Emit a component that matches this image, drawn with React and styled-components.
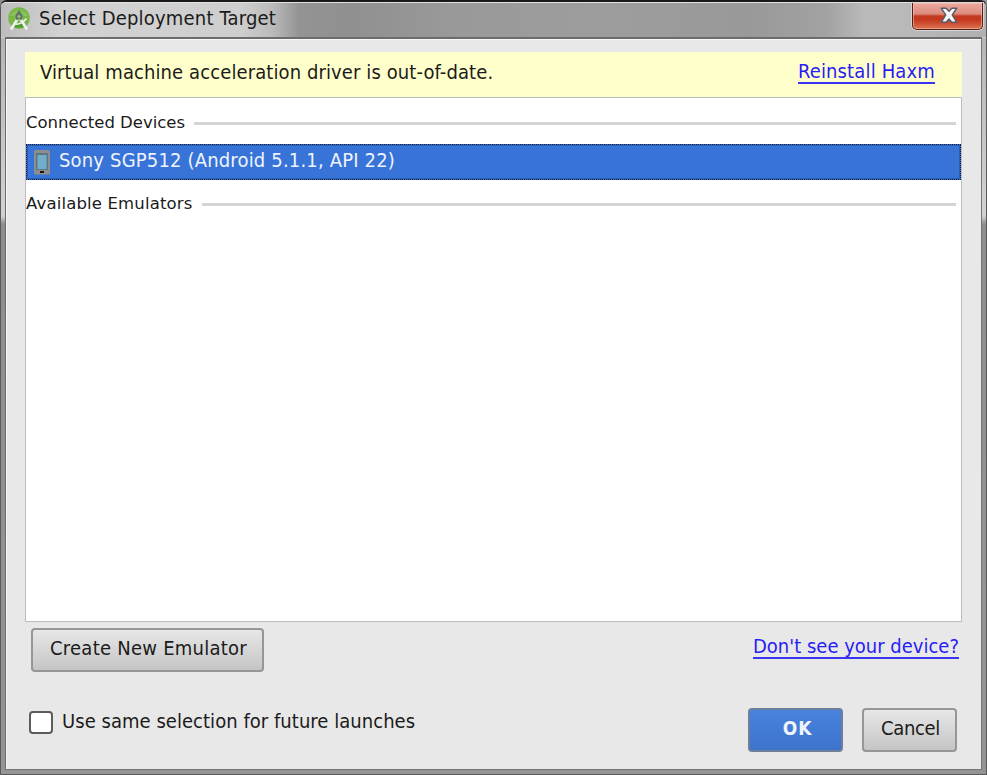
import React from 'react';
import styled, { createGlobalStyle } from 'styled-components';

const GlobalStyle = createGlobalStyle`
  * { box-sizing: border-box; }
  body { margin: 0; background: #8e8e8e; }
`;

const Window = styled.div`
  width: 987px;
  height: 775px;
  display: flex;
  flex-direction: column;
  padding: 0 4px 4px;
  border: 1px solid #5a5a5a;
  border-top: 2px solid #1c1718;
  border-radius: 7px 7px 0 0;
  background: linear-gradient(180deg, #b0b0b0 0, #d2d2d2 214px, #8e8e8e 222px, #949494 100%);
  font-family: "DejaVu Sans Condensed", "DejaVu Sans", sans-serif;
  font-size: 20px;
  color: #1b1b1b;
`;

const TitleBar = styled.header`
  height: 36px;
  margin: 0 -4px;
  padding: 0 3px 0 7px;
  display: flex;
  align-items: flex-start;
  border-top: 1px solid #e2e2e2;
  border-bottom: 1px solid #cfcfcf;
  border-radius: 5px 5px 0 0;
  background: linear-gradient(90deg, #bdbdbd 0, #d2d2d2 60px, #cecece 240px, #bababa 272px, #939393 298px, #909090 350px, #999 450px, #9d9d9d 600px, #999 750px, #a2a2a2 825px, #b9b9b9 862px, #b9b9b9 900px, #b0b0b0 100%);
`;

const Title = styled.h1`
  flex: 1;
  margin: 3px 0 0 7px;
  font: inherit;
  line-height: 24px;
  letter-spacing: 0.2px;
  white-space: nowrap;
`;

const Logo = styled.svg`
  width: 24px;
  height: 24px;
  margin-top: 4px;
`;

const CloseButton = styled.button`
  width: 71px;
  height: 27px;
  padding: 0 0 1px 3px;
  display: flex;
  align-items: center;
  justify-content: center;
  border: 1px solid #541e19;
  border-top: 0;
  border-radius: 0 0 5px 5px;
  background: linear-gradient(180deg, #eba99f 0, #dc8b7d 11px, #c23a20 13px, #c53a20 17px, #dc7352 100%);
  box-shadow: inset 0 0 0 1px rgba(255, 205, 190, 0.5), 0 0 0 1px #d6d6d6;
`;

const Client = styled.main`
  flex: 1;
  display: flex;
  flex-direction: column;
  padding: 13px 19px 0 19px;
  border: 1px solid #6c6c6c;
  border-top-width: 2px;
  margin-top: -1px;
  border-right-color: #777;
  border-bottom-color: #747474;
  background: #e8e8e8;
  box-shadow: inset 1px 1px 0 #f7f7f7;
`;

const Banner = styled.div`
  height: 45px;
  display: flex;
  justify-content: space-between;
  padding: 0 27px 0 15px;
  background: #ffffcc;
  line-height: 41px;
  letter-spacing: 0.1px;
`;

const Link = styled.a`
  height: 24px;
  margin-top: ${(p) => p.$top}px;
  border-bottom: 2px solid #3a35f2;
  color: #281df5;
  line-height: 23px;
  letter-spacing: ${(p) => p.$spacing || 0}px;
  white-space: nowrap;
`;

const DeviceList = styled.section`
  height: 525px;
  border: 1px solid #bdbdbd;
  background: #fff;
`;

const GroupHeading = styled.h2`
  height: 46px;
  margin: 0;
  padding: ${(p) => (p.$first ? 2 : 0)}px 5px 0 0;
  display: flex;
  align-items: center;
  gap: ${(p) => p.$gap}px;
  font: 400 16.5px "DejaVu Sans", sans-serif;
  letter-spacing: ${(p) => p.$spacing || 0}px;
  white-space: nowrap;

  &::after {
    content: "";
    flex: 1;
    height: 3px;
    margin-top: 3px;
    background: #d4d4d4;
  }
`;

const DeviceRow = styled.div`
  height: 36px;
  display: flex;
  align-items: center;
  padding-left: 7px;
  gap: 9px;
  border: 1px dotted #101c38;
  outline: 1px solid #2c5cae;
  outline-offset: -2px;
  background: #3874d8;
  color: #eef3fc;
  letter-spacing: 0.17px;
`;

const DeviceName = styled.span`
  line-height: 24px;
  margin-top: -5px;
`;

const Tools = styled.div`
  display: flex;
  justify-content: space-between;
  padding: 6px 3px 0 6px;
`;

const Button = styled.button`
  width: ${(p) => p.$width}px;
  height: 44px;
  padding: 0 0 5px ${(p) => (p.$primary ? 4 : 2)}px;
  border: 2px solid ${(p) => (p.$primary ? '#6e7f9c' : '#969696')};
  border-radius: 4px;
  background: ${(p) => (p.$primary
    ? 'linear-gradient(180deg, #4883df, #3d73cb)'
    : 'linear-gradient(180deg, #e7e7e7, #c5c5c5)')};
  color: ${(p) => (p.$primary ? '#f0f4fc' : '#1b1b1b')};
  font-family: inherit;
  font-size: ${(p) => (p.$primary ? 19 : 20)}px;
  font-weight: ${(p) => (p.$primary ? 700 : 400)};
  letter-spacing: ${(p) => p.$spacing || 0}px;
  white-space: nowrap;
`;

const Footer = styled.footer`
  display: flex;
  align-items: flex-start;
  margin-top: 36px;
  padding: 0 5px 0 4px;
`;

const CheckLabel = styled.label`
  flex: 1;
  display: flex;
  align-items: center;
  gap: 9px;
  line-height: 24px;
  letter-spacing: 0.04px;
`;

const Checkbox = styled.input`
  appearance: none;
  width: 24px;
  height: 23px;
  margin: 3px 0 0;
  border: 2px solid #5c5c5c;
  border-radius: 4px;
  background: #fff;
`;

const Actions = styled.div`
  display: flex;
  gap: 19px;
`;

const StudioIcon = () => (
  <Logo viewBox="0 0 24 24">
    <circle cx="11" cy="11" r="10.8" fill="#78b846" />
    <path d="M2 9a10 10 0 0 1 18 0" fill="#91c868" opacity=".6" />
    <path d="M7 20.5h8l1-4H6z" fill="#4e9a32" />
    <path d="M9.5 12 3 22.5M12.5 12l6.5 10.5" stroke="#f2f2f2" strokeWidth="2.6" fill="none" />
    <path d="M5.5 16.5q6.5 2.5 13-5" stroke="#eee" strokeWidth="1.8" fill="none" />
    <path d="M11 3 14.8 8.5l-1.3 5-2.5-2-2.5 2-1.3-5z" fill="#647365" />
    <circle cx="11" cy="9.5" r="1.5" fill="#9cc282" />
  </Logo>
);

const CloseIcon = () => (
  <svg width="18" height="17" viewBox="0 0 18 17">
    <path d="M1.2 1.2h5L9 4.4l2.8-3.2h5L12.2 8l4.6 7.3h-5L9 12l-2.8 3.3h-5L5.8 8z" fill="#f7f7f7" stroke="#555b6c" strokeWidth="1.4" strokeLinejoin="round" />
  </svg>
);

const TabletIcon = () => (
  <svg width="16" height="25" viewBox="0 0 16 25">
    <rect width="16" height="24.5" rx="1.5" fill="#8d8d8d" />
    <rect x="2" y="3" width="12" height="17" fill="#5a7783" />
    <rect x="3.5" y="5" width="9" height="14" fill="#72aecb" />
    <rect x="6" y="21" width="4" height="2" fill="#161616" />
  </svg>
);

export default function App() {
  return (
    <>
      <GlobalStyle />
      <Window>
        <TitleBar>
          <StudioIcon />
          <Title>Select Deployment Target</Title>
          <CloseButton aria-label="Close"><CloseIcon /></CloseButton>
        </TitleBar>
        <Client>
          <Banner>
            <span>Virtual machine acceleration driver is out-of-date.</span>
            <Link $top={8} $spacing={0.15}>Reinstall Haxm</Link>
          </Banner>
          <DeviceList>
            <GroupHeading $first $gap={9}>Connected Devices</GroupHeading>
            <DeviceRow>
              <TabletIcon />
              <DeviceName>Sony SGP512 (Android 5.1.1, API 22)</DeviceName>
            </DeviceRow>
            <GroupHeading $gap={9} $spacing={0.16}>Available Emulators</GroupHeading>
          </DeviceList>
          <Tools>
            <Button $width={233} $spacing={0.25}>Create New Emulator</Button>
            <Link $top={7}>Don't see your device?</Link>
          </Tools>
          <Footer>
            <CheckLabel>
              <Checkbox type="checkbox" />
              Use same selection for future launches
            </CheckLabel>
            <Actions>
              <Button $width={95} $primary $spacing={0.8}>OK</Button>
              <Button $width={95} $spacing={-0.3}>Cancel</Button>
            </Actions>
          </Footer>
        </Client>
      </Window>
    </>
  );
}
